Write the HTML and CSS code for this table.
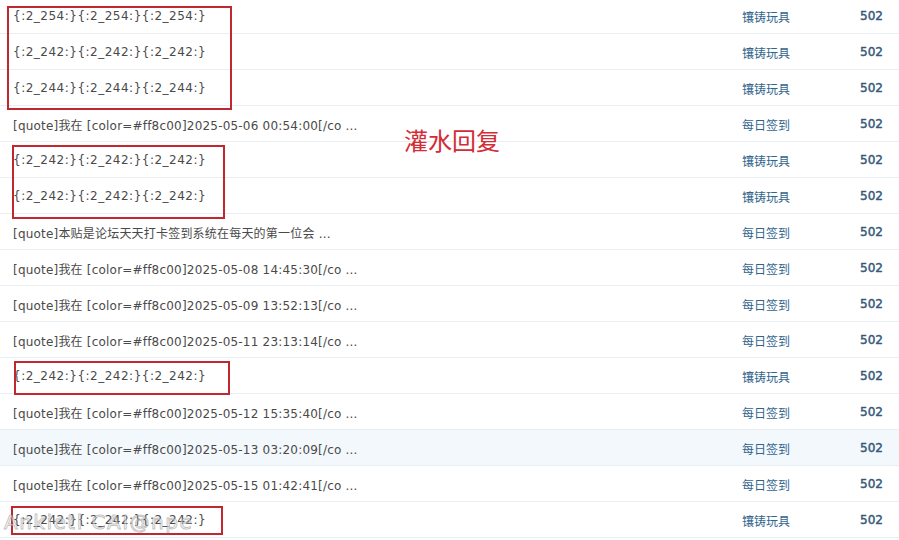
FILE: index.html
```html
<!DOCTYPE html>
<html lang="zh">
<head>
<meta charset="utf-8">
<link rel="stylesheet" href="styles.css">
</head>
<body>
<div class="page">
  <div class="list">
    <div class="row"><div class="subj emo">{:2_254:}{:2_254:}{:2_254:}</div><div class="cat">镶铸玩具</div><div class="num">502</div></div>
    <div class="row"><div class="subj emo">{:2_242:}{:2_242:}{:2_242:}</div><div class="cat">镶铸玩具</div><div class="num">502</div></div>
    <div class="row"><div class="subj emo">{:2_244:}{:2_244:}{:2_244:}</div><div class="cat">镶铸玩具</div><div class="num">502</div></div>
    <div class="row"><div class="subj">[quote]我在 [color=#ff8c00]2025-05-06 00:54:00[/co ...</div><div class="cat">每日签到</div><div class="num">502</div></div>
    <div class="row"><div class="subj emo">{:2_242:}{:2_242:}{:2_242:}</div><div class="cat">镶铸玩具</div><div class="num">502</div></div>
    <div class="row"><div class="subj emo">{:2_242:}{:2_242:}{:2_242:}</div><div class="cat">镶铸玩具</div><div class="num">502</div></div>
    <div class="row"><div class="subj">[quote]本贴是论坛天天打卡签到系统在每天的第一位会 ...</div><div class="cat">每日签到</div><div class="num">502</div></div>
    <div class="row"><div class="subj">[quote]我在 [color=#ff8c00]2025-05-08 14:45:30[/co ...</div><div class="cat">每日签到</div><div class="num">502</div></div>
    <div class="row"><div class="subj">[quote]我在 [color=#ff8c00]2025-05-09 13:52:13[/co ...</div><div class="cat">每日签到</div><div class="num">502</div></div>
    <div class="row"><div class="subj">[quote]我在 [color=#ff8c00]2025-05-11 23:13:14[/co ...</div><div class="cat">每日签到</div><div class="num">502</div></div>
    <div class="row"><div class="subj emo">{:2_242:}{:2_242:}{:2_242:}</div><div class="cat">镶铸玩具</div><div class="num">502</div></div>
    <div class="row"><div class="subj">[quote]我在 [color=#ff8c00]2025-05-12 15:35:40[/co ...</div><div class="cat">每日签到</div><div class="num">502</div></div>
    <div class="row hover"><div class="subj">[quote]我在 [color=#ff8c00]2025-05-13 03:20:09[/co ...</div><div class="cat">每日签到</div><div class="num">502</div></div>
    <div class="row"><div class="subj">[quote]我在 [color=#ff8c00]2025-05-15 01:42:41[/co ...</div><div class="cat">每日签到</div><div class="num">502</div></div>
    <div class="row"><div class="subj emo">{:2_242:}{:2_242:}{:2_242:}</div><div class="cat">镶铸玩具</div><div class="num">502</div></div>
  </div>
  <div class="box box1"></div>
  <div class="box box2"></div>
  <div class="box box3"></div>
  <div class="box box4"></div>
  <div class="note">灌水回复</div>
  <div class="mark">Ankietl CAI@npe</div>
</div>
</body>
</html>
```

FILE: styles.css
```css
html, body {
  margin: 0;
  padding: 0;
  background: #fff;
}
body {
  width: 899px;
  height: 540px;
  overflow: hidden;
  font-family: "DejaVu Sans", "Noto Sans CJK SC", sans-serif;
  font-size: 12px;
}
.page {
  position: relative;
  width: 899px;
  height: 540px;
  overflow: hidden;
}
.list {
  margin-top: -2px;
}
.row {
  display: grid;
  grid-template-columns: 1fr 97px 60px;
  align-items: center;
  height: 34px;
  padding-top: 1px;
  border-bottom: 1px solid #e9eef2;
}
.row.hover {
  background: #f2f8fc;
}
.subj {
  padding-left: 13px;
  color: #4a4a4a;
  white-space: nowrap;
  letter-spacing: 0.2px;
}
.subj.emo {
  letter-spacing: 0.5px;
}
.cat {
  color: #32658c;
}
.num {
  text-align: right;
  padding-right: 16px;
  color: #36587a;
  -webkit-text-stroke: 0.45px #36587a;
}
.box {
  position: absolute;
  border: 2px solid #c0282f;
  box-sizing: border-box;
}
.box1 { left: 7px; top: 6px; width: 225px; height: 104px; }
.box2 { left: 12px; top: 145px; width: 213px; height: 74px; }
.box3 { left: 14px; top: 361px; width: 216px; height: 34px; }
.box4 { left: 11px; top: 506px; width: 212px; height: 29px; }
.note {
  position: absolute;
  left: 404px;
  top: 124px;
  font-size: 24px;
  line-height: 32px;
  color: #d22c36;
  font-family: "Noto Sans CJK SC", sans-serif;
}
.mark {
  position: absolute;
  left: 4px;
  top: 509px;
  font-size: 20px;
  line-height: 26px;
  color: rgba(255,255,255,0.5);
  -webkit-text-stroke: 1px rgba(120,120,120,0.45);
  font-family: "DejaVu Sans", sans-serif;
  letter-spacing: 1.5px;
}
```
